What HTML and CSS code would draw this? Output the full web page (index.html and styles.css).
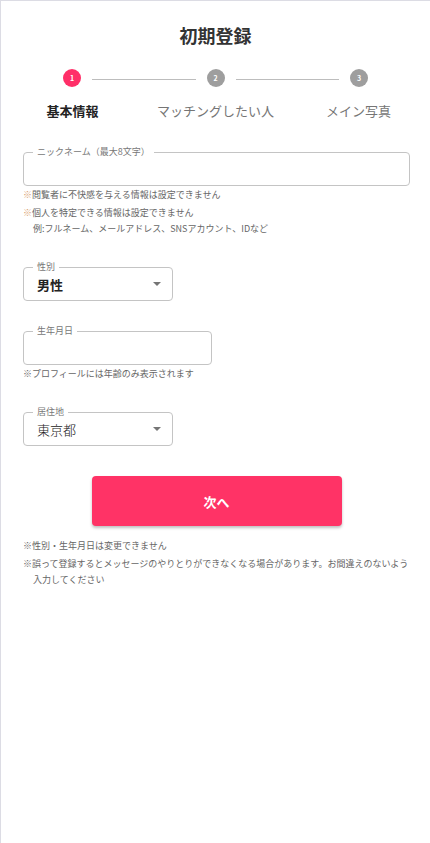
FILE: index.html
```html
<!DOCTYPE html>
<html lang="ja">
<head>
  <meta charset="UTF-8">
  <title>初期登録</title>
  <link rel="stylesheet" href="styles.css">
</head>
<body>
  <div class="page">
    <h1 class="title">初期登録</h1>

    <div class="stepper">
      <div class="track">
        <span class="dot active">1</span>
        <span class="line"></span>
        <span class="dot">2</span>
        <span class="line"></span>
        <span class="dot">3</span>
      </div>
      <div class="labels">
        <span class="label active">基本情報</span>
        <span class="label">マッチングしたい人</span>
        <span class="label">メイン写真</span>
      </div>
    </div>

    <form class="form">
      <div class="field nickname">
        <div class="box wide">
          <span class="legend">ニックネーム（最大8文字）</span>
        </div>
        <p class="note first"><span class="mark">※</span>閲覧者に不快感を与える情報は設定できません</p>
        <p class="note"><span class="mark">※</span>個人を特定できる情報は設定できません<br><span class="indent">例:フルネーム、メールアドレス、SNSアカウント、IDなど</span></p>
      </div>

      <div class="field">
        <div class="box select">
          <span class="legend">性別</span>
          <span class="value strong">男性</span>
          <span class="arrow"></span>
        </div>
      </div>

      <div class="field">
        <div class="box date">
          <span class="legend">生年月日</span>
        </div>
        <p class="note first">※プロフィールには年齢のみ表示されます</p>
      </div>

      <div class="field">
        <div class="box select">
          <span class="legend">居住地</span>
          <span class="value">東京都</span>
          <span class="arrow"></span>
        </div>
      </div>

      <div class="actions">
        <button type="button" class="next">次へ</button>
      </div>

      <div class="notes">
        <p class="note">※性別・生年月日は変更できません</p>
        <p class="note hang">※誤って登録するとメッセージのやりとりができなくなる場合があります。お間違えのないよう入力してください</p>
      </div>
    </form>
  </div>
</body>
</html>
```

FILE: styles.css
```css
html, body { margin: 0; background: #fff; }
body {
  font-family: "Noto Sans CJK JP", "Noto Sans", sans-serif;
  color: #222;
}
.page {
  min-height: 843px;
  box-sizing: border-box;
  border-left: 1px solid #dcdce4;
  border-top: 1px solid #dcdce4;
}
.title {
  margin: 0;
  padding-top: 22px;
  font-size: 18px;
  line-height: 24px;
  font-weight: 700;
  text-align: center;
  color: #333;
}

/* stepper */
.stepper { margin-top: 22px; }
.track {
  display: flex;
  align-items: center;
  padding: 0 62px 0 62px;
}
.dot {
  width: 18px;
  height: 18px;
  border-radius: 50%;
  background: #9e9e9e;
  color: #fff;
  font-size: 7px;
  font-weight: 700;
  line-height: 18px;
  text-align: center;
  flex: none;
}
.dot.active { background: #ff2f68; }
.line {
  flex: 1;
  height: 1px;
  background: #bdbdbd;
  margin: 3px 11px 0 11px;
}
.labels {
  display: grid;
  grid-template-columns: 1fr 1fr 1fr;
  margin-top: 15px;
}
.label {
  text-align: center;
  font-size: 13px;
  line-height: 18px;
  color: #757575;
}
.label.active { color: #222; font-weight: 700; }

/* form */
.form { padding: 32px 20px 0 22px; }
.field { margin-bottom: 30px; }
.box {
  position: relative;
  height: 34px;
  box-sizing: border-box;
  border: 1px solid #c4c4c4;
  border-radius: 4px;
  display: flex;
  align-items: center;
}
.box.wide { width: 100%; }
.box.select { width: 150px; }
.box.date { width: 189px; }
.legend {
  position: absolute;
  left: 9px;
  top: -7px;
  padding: 0 4px;
  background: #fff;
  font-size: 9px;
  line-height: 12px;
  color: #777;
}
.value {
  padding-left: 13px;
  font-size: 13px;
  font-weight: 300;
  color: #222;
}
.value.strong { font-weight: 700; }
.arrow {
  margin-left: auto;
  margin-right: 11px;
  width: 0;
  height: 0;
  border-left: 4px solid transparent;
  border-right: 4px solid transparent;
  border-top: 4px solid #757575;
}
.note {
  margin: 2px 0 0 0;
  font-size: 9px;
  line-height: 16px;
  color: #666;
}
.note.first { margin-top: 1px; }
.mark { color: #d9a070; }
.indent { padding-left: 10px; }
.actions {
  display: flex;
  justify-content: center;
  margin-top: 1px;
}
.next {
  width: 250px;
  height: 50px;
  border: none;
  border-radius: 4px;
  background: #ff3366;
  color: #fff;
  font-family: inherit;
  font-size: 13px;
  font-weight: 700;
  box-shadow: 0 2px 3px rgba(0, 0, 0, 0.25);
  cursor: pointer;
}
.notes { margin-top: 12px; }
.hang {
  padding-left: 10px;
  text-indent: -10px;
}
```
